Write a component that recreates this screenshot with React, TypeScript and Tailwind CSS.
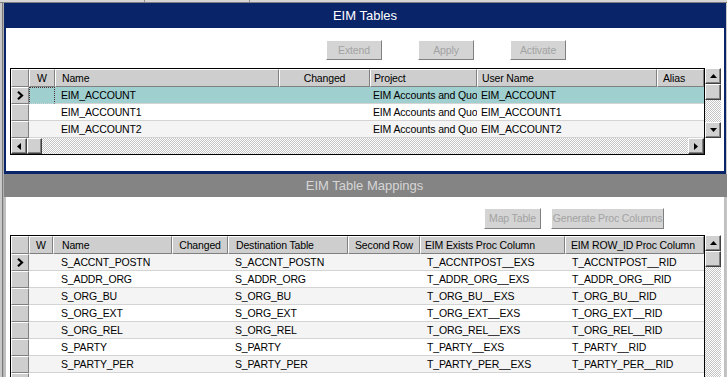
import React from "react";

type Col = { w: string; label: string; hpl: string; dpl: string; center?: boolean };
type Row = { cells: string[] };

const raised =
  "border-t border-l border-b border-r border-t-white border-l-white border-b-[#808080] border-r-[#808080]";

function Tri({ dir }: { dir: "up" | "down" | "left" | "right" }) {
  if (dir === "up")
    return (
      <svg width="7" height="4" viewBox="0 0 7 4">
        <polygon points="3.5,0 7,4 0,4" fill="#000" />
      </svg>
    );
  if (dir === "down")
    return (
      <svg width="7" height="4" viewBox="0 0 7 4">
        <polygon points="0,0 7,0 3.5,4" fill="#000" />
      </svg>
    );
  if (dir === "left")
    return (
      <svg width="4" height="7" viewBox="0 0 4 7">
        <polygon points="4,0 4,7 0,3.5" fill="#000" />
      </svg>
    );
  return (
    <svg width="4" height="7" viewBox="0 0 4 7">
      <polygon points="0,0 0,7 4,3.5" fill="#000" />
    </svg>
  );
}

function SBtn({ dir, w = "w-[16px]", h = "h-[16px]" }: { dir?: "up" | "down" | "left" | "right"; w?: string; h?: string }) {
  return (
    <div
      className={`${w} ${h} shrink-0 flex items-center justify-center bg-[#d0d0d0] border-t border-l border-b border-r border-t-white border-l-white border-b-[#404040] border-r-[#404040] shadow-[inset_-1px_-1px_0_#808080]`}
    >
      {dir ? <Tri dir={dir} /> : null}
    </div>
  );
}

const checker =
  "bg-[image:repeating-conic-gradient(#c4c4c4_0_25%,#ffffff_0_50%)] bg-[length:2px_2px]";

function Chevron() {
  return (
    <svg width="7" height="9" viewBox="0 0 7 9">
      <polyline points="1,0.8 5,4.5 1,8.2" fill="none" stroke="#000" strokeWidth="2.2" />
    </svg>
  );
}

function Grid({
  cols,
  rows,
  selected,
  focus,
  hscroll,
}: {
  cols: Col[];
  rows: Row[];
  selected: number;
  focus?: boolean;
  hscroll?: boolean;
}) {
  return (
    <div className="w-[695px] border border-black bg-white shrink-0">
      <div className="flex h-[18px]">
        <div className={`w-[18px] shrink-0 bg-[#cecece] ${raised}`} />
        {cols.map((c, i) => (
          <div
            key={i}
            className={`${c.w} shrink-0 bg-[#cecece] ${raised} flex items-center overflow-hidden whitespace-nowrap ${
              c.center ? "justify-center" : c.hpl
            }`}
          >
            {c.label}
          </div>
        ))}
      </div>
      {rows.map((r, ri) => {
        const bg = ri === 0 && focus ? "bg-[#9fcfcf]" : ri % 2 === 0 ? "bg-[#f4f4f4]" : "bg-white";
        return (
          <div key={ri} className="flex h-[17px]">
            <div className={`w-[18px] shrink-0 bg-[#cecece] ${raised} flex items-center justify-center`}>
              {ri === selected ? <Chevron /> : null}
            </div>
            {cols.map((c, ci) => (
              <div
                key={ci}
                className={`${c.w} shrink-0 ${bg} border-b border-b-[#d4d4d4] flex items-center overflow-hidden whitespace-nowrap ${c.dpl} ${
                  focus && ri === 0 && ci === 0 ? "border border-dotted border-[#4a3030]" : ""
                }`}
              >
                {r.cells[ci]}
              </div>
            ))}
          </div>
        );
      })}
      {hscroll ? (
        <div className="flex h-[16px]">
          <SBtn dir="left" />
          <SBtn w="w-[15px]" />
          <div className={`flex-1 ${checker}`} />
          <SBtn dir="right" />
        </div>
      ) : null}
    </div>
  );
}

function VScroll({ h }: { h: string }) {
  return (
    <div className={`w-[16px] ${h} flex flex-col shrink-0 self-start`}>
      <SBtn dir="up" />
      <SBtn />
      <div className={`flex-1 ${checker}`} />
      <SBtn dir="down" />
    </div>
  );
}

function VScrollOpen() {
  return (
    <div className="w-[16px] h-[160px] flex flex-col shrink-0 self-start">
      <SBtn dir="up" />
      <SBtn />
      <div className={`flex-1 ${checker}`} />
    </div>
  );
}

function Btn({ label, cls }: { label: string; cls: string }) {
  return (
    <div
      className={`${cls} shrink-0 flex items-center justify-center bg-[#d4d4d4] border-t border-l border-b border-r border-t-white border-l-white border-b-[#808080] border-r-[#808080] text-[#a3a3a3] whitespace-nowrap`}
    >
      {label}
    </div>
  );
}

const topCols: Col[] = [
  { w: "w-[26px]", label: "W", hpl: "", dpl: "pl-[5px]", center: true },
  { w: "w-[224px]", label: "Name", hpl: "pl-[6px]", dpl: "pl-[6px]" },
  { w: "w-[91px]", label: "Changed", hpl: "", dpl: "pl-[4px]", center: true },
  { w: "w-[107px]", label: "Project", hpl: "pl-[3px]", dpl: "pl-[3px]" },
  { w: "w-[180px]", label: "User Name", hpl: "pl-[4px]", dpl: "pl-[4px]" },
  { w: "w-[47px]", label: "Alias", hpl: "pl-[5px]", dpl: "pl-[5px]" },
];

const topRows: Row[] = [
  { cells: ["", "EIM_ACCOUNT", "", "EIM Accounts and Quotes", "EIM_ACCOUNT", ""] },
  { cells: ["", "EIM_ACCOUNT1", "", "EIM Accounts and Quotes", "EIM_ACCOUNT1", ""] },
  { cells: ["", "EIM_ACCOUNT2", "", "EIM Accounts and Quotes", "EIM_ACCOUNT2", ""] },
];

const botCols: Col[] = [
  { w: "w-[24px]", label: "W", hpl: "", dpl: "pl-[5px]", center: true },
  { w: "w-[119px]", label: "Name", hpl: "pl-[8px]", dpl: "pl-[8px]" },
  { w: "w-[56px]", label: "Changed", hpl: "", dpl: "pl-[4px]", center: true },
  { w: "w-[120px]", label: "Destination Table", hpl: "pl-[7px]", dpl: "pl-[7px]" },
  { w: "w-[72px]", label: "Second Row", hpl: "pl-[6px]", dpl: "pl-[6px]" },
  { w: "w-[145px]", label: "EIM Exists Proc Column", hpl: "pl-[4px]", dpl: "pl-[7px]" },
  { w: "w-[139px]", label: "EIM ROW_ID Proc Column", hpl: "pl-[5px]", dpl: "pl-[7px]" },
];

const botData = [
  ["S_ACCNT_POSTN", "T_ACCNTPOST__EXS", "T_ACCNTPOST__RID"],
  ["S_ADDR_ORG", "T_ADDR_ORG__EXS", "T_ADDR_ORG__RID"],
  ["S_ORG_BU", "T_ORG_BU__EXS", "T_ORG_BU__RID"],
  ["S_ORG_EXT", "T_ORG_EXT__EXS", "T_ORG_EXT__RID"],
  ["S_ORG_REL", "T_ORG_REL__EXS", "T_ORG_REL__RID"],
  ["S_PARTY", "T_PARTY__EXS", "T_PARTY__RID"],
  ["S_PARTY_PER", "T_PARTY_PER__EXS", "T_PARTY_PER__RID"],
  ["S_PARTY_RPT_REL", "T_PARTY_RPT_REL__EXS", "T_PARTY_RPT_REL__RID"],
];

const botRows: Row[] = botData.map((d) => ({ cells: ["", d[0], "", d[0], "", d[1], d[2]] }));

export default function App() {
  return (
    <div className="w-[727px] h-[377px] overflow-hidden bg-[#c8c8c8] font-['Liberation_Sans',Arial,sans-serif] text-[10.5px] tracking-[-0.15px] text-black leading-none">
      {/* top strip */}
      <div className="h-[3px] flex border-b border-b-[#808080] bg-[#d6d6d6]">
        <div className="w-[145px] border-r border-r-[#909090]" />
        <div className="w-[105px] border-r border-r-[#909090]" />
      </div>
      <div className="flex">
        {/* left strip */}
        <div className="w-[4px] shrink-0 flex">
          <div className="w-[2px] bg-[#c8c8c8]" />
          <div className="w-[1px] bg-[#7a7a7a]" />
          <div className="w-[1px] bg-[#b0b0b0]" />
        </div>
        <div className="w-[723px] flex flex-col">
          {/* Panel 1 */}
          <div className="w-[722px] bg-[#0a246a] px-[2px] pb-[3px]">
            <div className="h-[25px] flex items-center justify-center text-white text-[13px] tracking-normal">
              EIM Tables
            </div>
            <div className="h-[143px] bg-white pt-[12px] pl-[4px]">
              <div className="flex h-[20px]">
                <Btn label="Extend" cls="ml-[316px] w-[56px]" />
                <Btn label="Apply" cls="ml-[36px] w-[56px]" />
                <Btn label="Activate" cls="ml-[36px] w-[56px]" />
              </div>
              <div className="mt-[8px] flex">
                <Grid cols={topCols} rows={topRows} selected={0} focus hscroll />
                <VScroll h="h-[70px]" />
              </div>
            </div>
          </div>
          {/* Grey band */}
          <div className="h-[23px] bg-[#848484] flex items-center justify-center text-[#d6d6d6] text-[13px] tracking-normal pr-[2px]">
            EIM Table Mappings
          </div>
          {/* Panel 2 */}
          <div className="w-[722px] bg-[#c0c0c0] px-[2px] h-[180px]">
            <div className="h-[180px] bg-white pt-[11px] pl-[4px]">
              <div className="flex h-[21px]">
                <Btn label="Map Table" cls="ml-[474px] w-[57px]" />
                <Btn label="Generate Proc Columns" cls="ml-[10px] w-[113px]" />
              </div>
              <div className="mt-[6px] flex">
                <Grid cols={botCols} rows={botRows} selected={0} />
                <VScrollOpen />
              </div>
            </div>
          </div>
        </div>
      </div>
    </div>
  );
}
